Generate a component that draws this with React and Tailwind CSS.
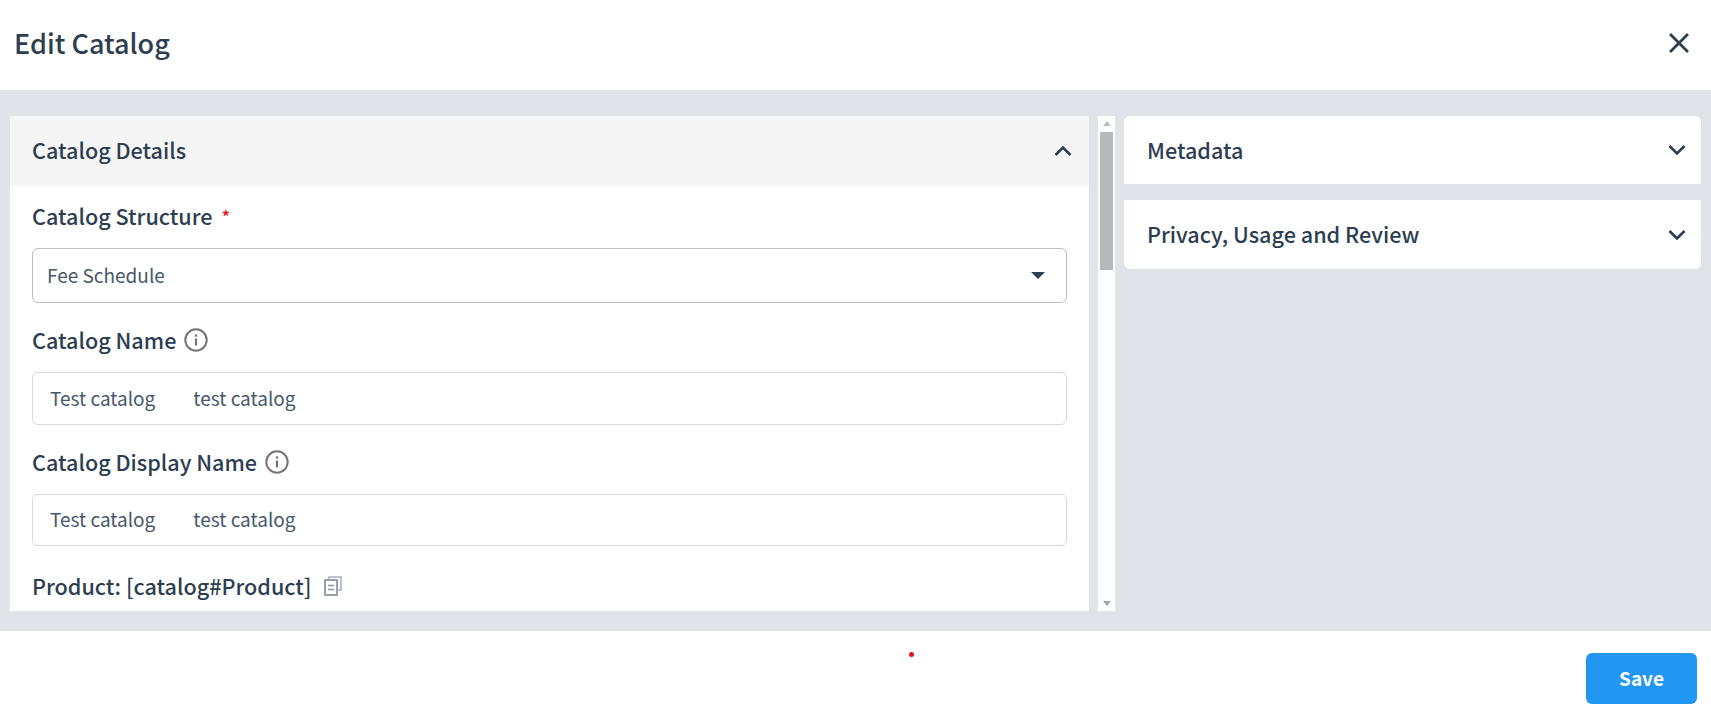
import React from 'react';

const font = "font-['Noto_Sans_CJK_SC','Noto_Sans',sans-serif]";

const InfoIcon = () => (
  <svg width="24" height="24" viewBox="0 0 24 24" fill="none" className="ml-[8px]">
    <circle cx="12" cy="12" r="10.7" stroke="#757575" strokeWidth="2" />
    <rect x="10.9" y="10.5" width="2.2" height="7" fill="#757575" />
    <rect x="10.9" y="6.4" width="2.2" height="2.2" fill="#757575" />
  </svg>
);

const CopyIcon = () => (
  <svg width="18" height="20" viewBox="0 0 18 20" fill="none" className="ml-[12px]">
    <path d="M5 3.5V1h12v13h-3" stroke="#a5afba" strokeWidth="1.5" />
    <rect x="1" y="4" width="12" height="15" stroke="#8b97a4" strokeWidth="1.8" />
    <path d="M4 9.5h6M4 13.5h6" stroke="#8b97a4" strokeWidth="1.5" />
  </svg>
);

const Chevron = ({ up }) => (
  <svg width="18" height="12" viewBox="0 0 18 12" fill="none">
    <path d={up ? 'M1.5 10L9 2.5L16.5 10' : 'M1.5 2L9 9.5L16.5 2'} stroke="#2c3e50" strokeWidth="2.6" />
  </svg>
);

const Label = ({ children, className = '' }) => (
  <div className={`flex items-center text-[21.6px] leading-[28px] font-medium text-[#2c3e50] ${className}`}>
    {children}
  </div>
);

const TextField = ({ className = '' }) => (
  <div className={`flex items-center border border-[#d9d9d9] rounded-md pl-[17px] pb-[1px] text-[19px] text-[#46586a] ${className}`}>
    <span>Test catalog</span>
    <span className="ml-[38px]">test catalog</span>
  </div>
);

const SideCard = ({ title, className = '' }) => (
  <div className={`flex items-center justify-between bg-white pl-[23px] pr-[15px] text-[21.6px] font-medium text-[#2c3e50] ${className}`}>
    <span>{title}</span>
    <Chevron />
  </div>
);

export default function App() {
  return (
    <div className={`flex flex-col h-[705px] bg-white ${font}`}>
      {/* Header */}
      <div className="flex items-center justify-between h-[91px] shrink-0 border-b border-[#e6e8eb] pl-[14px] pr-[21px] pb-[4px]">
        <h1 className="text-[27px] font-medium text-[#2c3e50]">Edit Catalog</h1>
        <svg width="22" height="22" viewBox="0 0 22 22" fill="none">
          <path d="M2 2L20 20M20 2L2 20" stroke="#2c3e50" strokeWidth="2.8" />
        </svg>
      </div>

      {/* Body */}
      <div className="flex flex-1 min-h-0 bg-[#e0e3e8] pt-[25px] pb-[19px] pl-[10px] pr-[10px]">
        <div className="w-[1079px] shrink-0 bg-white overflow-hidden">
          <div className="flex items-center justify-between h-[70px] bg-[#f5f5f5] pl-[22px] pr-[17px] pb-[1px] text-[21.6px] font-medium text-[#2c3e50]">
            <span>Catalog Details</span>
            <Chevron up />
          </div>
          <div className="pl-[22px] pr-[22px]">
            <Label className="mt-[16px]">
              Catalog Structure
              <span className="ml-[9px] text-[18px] text-[#e8111a]">*</span>
            </Label>
            <div className="flex items-center justify-between h-[55px] mt-[18px] border border-[#bdbdbd] rounded-md pl-[14px] pr-[21px] pb-[1px] text-[19px] text-[#46586a]">
              <span>Fee Schedule</span>
              <span className="w-0 h-0 border-x-[7px] border-x-transparent border-t-[7px] border-t-[#2c3e50]" />
            </div>
            <Label className="mt-[23px]">
              Catalog Name
              <InfoIcon />
            </Label>
            <TextField className="h-[53px] mt-[18px]" />
            <Label className="mt-[23px]">
              Catalog Display Name
              <InfoIcon />
            </Label>
            <TextField className="h-[52px] mt-[18px]" />
            <Label className="mt-[26px]">
              Product: [catalog#Product]
              <CopyIcon />
            </Label>
          </div>
        </div>

        {/* Scrollbar */}
        <div className="flex flex-col items-center justify-between w-[17px] shrink-0 ml-[9px] bg-white pt-[5px] pb-[5px]">
          <div className="flex flex-col items-center w-full">
            <span className="w-0 h-0 border-x-[4px] border-x-transparent border-b-[5px] border-b-[#bdbdbd]" />
            <div className="w-[13px] h-[138px] mt-[6px] bg-[#b8b8b8]" />
          </div>
          <span className="w-0 h-0 border-x-[4px] border-x-transparent border-t-[5px] border-t-[#a3a3a3]" />
        </div>

        {/* Right column */}
        <div className="flex-1 ml-[9px] flex flex-col gap-[16px]">
          <SideCard title="Metadata" className="h-[68px] rounded-t-md" />
          <SideCard title="Privacy, Usage and Review" className="h-[69px] rounded-b-md" />
        </div>
      </div>

      {/* Footer */}
      <div className="relative flex justify-end items-start h-[75px] shrink-0 border-t border-[#e6e8eb] pt-[22px] pr-[14px]">
        <span className="absolute left-[909px] top-[21px] w-[5px] h-[5px] rounded-full bg-[#e8111a]" />
        <button className="w-[111px] h-[51px] rounded-md bg-[#2196f3] text-[19px] font-bold text-white">Save</button>
      </div>
    </div>
  );
}
